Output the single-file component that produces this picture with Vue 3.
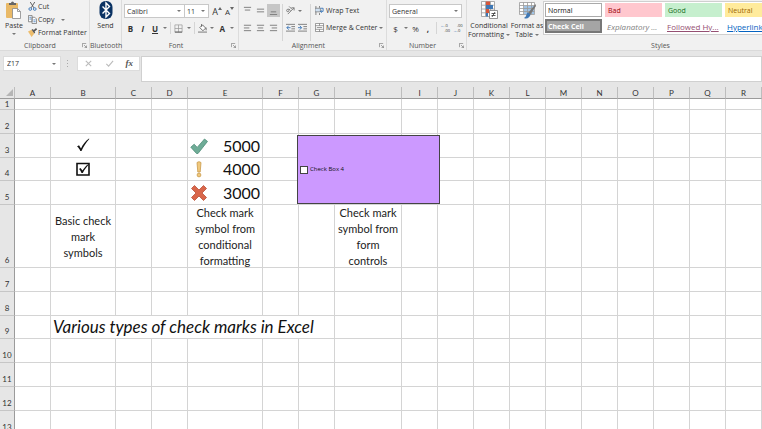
<script setup>
import { h, ref } from 'vue'

const Caret = () =>
  h('svg', { class: 'caret', viewBox: '0 0 4 2', 'aria-hidden': 'true' }, [h('path', { d: 'M0 0h4L2 2z' })])
const Launcher = () =>
  h('svg', { class: 'launcher', viewBox: '0 0 6 6', 'aria-hidden': 'true' }, [
    h('path', { d: 'M.5 5V.5H5M2.5 2.5l3 3M5.5 3v2.5H3', fill: 'none', stroke: '#777', 'stroke-width': '.8' })
  ])

const fontName = ref('Calibri')
const fontSize = ref('11')
const numberFormat = ref('General')
const nameBox = ref('Z17')
const formula = ref('')
const checked = ref(false)

const styles = [
  { name: 'Normal', kind: 'normal' },
  { name: 'Bad', kind: 'bad' },
  { name: 'Good', kind: 'good' },
  { name: 'Neutral', kind: 'neutral' },
  { name: 'Check Cell', kind: 'check' },
  { name: 'Explanatory ...', kind: 'explain' },
  { name: 'Followed Hy...', kind: 'followed' },
  { name: 'Hyperlink', kind: 'link' }
]

const columns = 'ABCDEFGHIJKLMNOPQR'.split('')
const wide = { B: 65, E: 75, H: 67 }
const heights = { 1: 11, 4: 23, 6: 63, 9: 23 }
const rows = Array.from({ length: 13 }, (_, i) => i + 1)
const cells = {
  B3: { icon: 'tick' },
  B4: { icon: 'boxed' },
  E3: { icon: 'good', value: '5000' },
  E4: { icon: 'warn', value: '4000' },
  E5: { icon: 'bad', value: '3000' },
  B6: { note: 'Basic check mark symbols' },
  E6: { note: 'Check mark symbol from conditional formatting' },
  H6: { note: 'Check mark symbol from form controls' },
  B9: { title: 'Various types of check marks in Excel', span: 6 }
}
const cell = (c, r) => cells[c + r] || {}
const columnsOf = (r) => (r === 9 ? columns.filter((c) => !'CDEFG'.includes(c)) : columns)
</script>

<template>
  <main class="app">
    <header class="ribbon">
      <section class="group clipboard">
        <div class="tools">
          <button class="big">
            <svg class="big-icon" viewBox="0 0 18 18">
              <rect x="1" y="2" width="12" height="15" rx="1" fill="#e9b967" />
              <path d="M4 4V2h2a1.500 1.500 0 0 1 3 0h2v2z" fill="#666" />
              <path d="M7.500 7.500h5l3 3v7h-8z" fill="#fff" stroke="#888" stroke-width=".8" />
              <path d="M12.500 7.500v3h3" fill="none" stroke="#888" stroke-width=".8" />
            </svg>
            <span>Paste</span>
            <Caret />
          </button>
          <div class="stack">
            <button class="small">
              <svg class="icon" viewBox="0 0 10 10">
                <path d="M2.500 0l4 6.500M7.500 0l-4 6.500" stroke="#555" fill="none" />
                <circle cx="2.500" cy="7.800" r="1.500" fill="none" stroke="#3a76b8" />
                <circle cx="7.500" cy="7.800" r="1.500" fill="none" stroke="#3a76b8" />
              </svg>
              Cut
            </button>
            <button class="small">
              <svg class="icon" viewBox="0 0 10 10">
                <path d="M.5.5h4v7h-4zM4.500 2.500h3l2 2v5h-5z" fill="#fff" stroke="#777" stroke-width=".9" />
                <path d="M1.500 2.500h2M1.500 4.500h2M6 5.500h2.500M6 7.500h2.500" stroke="#3a76b8" stroke-width=".9" />
              </svg>
              Copy <Caret class="spaced" />
            </button>
            <button class="small">
              <svg class="icon" viewBox="0 0 10 10">
                <path d="M0 4l4-2 3 4-3 4z" fill="#edbd6d" />
                <path d="M4 2l3 4 1-1-2.500-4z" fill="#555" />
                <path d="M6.500 3.500L9.500.8" stroke="#555" stroke-width="1.800" />
              </svg>
              Format Painter
            </button>
          </div>
        </div>
        <footer>Clipboard<Launcher /></footer>
      </section>

      <section class="group bluetooth">
        <div class="tools">
          <button class="big">
            <svg class="big-icon" viewBox="0 0 18 18">
              <rect x="2.500" y="0" width="13" height="18" rx="6" fill="#0a3263" />
              <path d="M5.500 5.500l7 7L9 16V2l3.500 3.500-7 7" fill="none" stroke="#fff" stroke-width="1.400" />
            </svg>
            <span>Send</span>
          </button>
        </div>
        <footer>Bluetooth</footer>
      </section>

      <section class="group font">
        <div class="tools lines">
          <div class="line">
            <label class="combo family">
              <select v-model="fontName" aria-label="Font"><option>Calibri</option></select><Caret />
            </label>
            <label class="combo size">
              <select v-model="fontSize" aria-label="Font size"><option>11</option></select><Caret />
            </label>
            <button class="grow" aria-label="Increase font size">A<svg viewBox="0 0 4 3"><path d="M0 3l2-3 2 3z" /></svg></button>
            <button class="grow less" aria-label="Decrease font size">A<svg viewBox="0 0 4 3"><path d="M0 0h4L2 3z" /></svg></button>
          </div>
          <div class="line marks">
            <button class="mark"><b>B</b></button>
            <button class="mark"><b><i>I</i></b></button>
            <button class="mark"><b><u>U</u></b></button>
            <Caret />
            <span class="rule"></span>
            <button class="mark" aria-label="Borders">
              <svg class="icon" viewBox="0 0 10 10">
                <path d="M1 1h8v8H1zM5 1v8M1 5h8" fill="none" stroke="#999" stroke-width=".8" />
                <path d="M1 9h8" stroke="#555" />
              </svg>
            </button>
            <Caret />
            <span class="rule"></span>
            <button class="mark" aria-label="Fill colour">
              <svg class="icon" viewBox="0 0 10 10">
                <path d="M2 4l3-3 3.500 3.500-3 3z" fill="#fff" stroke="#555" stroke-width=".9" />
                <path d="M4 3V0M9 4v3" stroke="#555" stroke-width=".9" />
                <path d="M0 9h10" stroke="#999" stroke-width="1.500" />
              </svg>
            </button>
            <Caret />
            <button class="mark"><b>A</b></button>
            <Caret />
          </div>
        </div>
        <footer>Font<Launcher /></footer>
      </section>

      <section class="group alignment">
        <div class="tools aligns">
          <div class="align-grid">
            <button aria-label="Top align"><svg class="icon" viewBox="0 0 10 10"><path d="M1 1.500h8M2 4.500h6" /></svg></button>
            <button aria-label="Middle align"><svg class="icon" viewBox="0 0 10 10"><path d="M1 3.500h8M1 6.500h8" /></svg></button>
            <button class="active" aria-label="Bottom align"><svg class="icon" viewBox="0 0 10 10"><path d="M2 6.500h6M1 9.500h8" /></svg></button>
            <button aria-label="Align left"><svg class="icon" viewBox="0 0 10 10"><path d="M1 2.500h8M1 5.500h6M1 8.500h8" /></svg></button>
            <button aria-label="Center"><svg class="icon" viewBox="0 0 10 10"><path d="M1 2.500h8M2 5.500h6M1 8.500h8" /></svg></button>
            <button aria-label="Align right"><svg class="icon" viewBox="0 0 10 10"><path d="M1 2.500h8M3 5.500h6M1 8.500h8" /></svg></button>
          </div>
          <div class="indent">
            <button aria-label="Orientation">
              <svg class="icon" viewBox="0 0 10 10">
                <path d="M2 9l7-7M9 5V2H6" fill="none" />
                <circle cx="2" cy="5" r="1.300" fill="none" /><path d="M3 3l2 2M3.500.5l3 3" fill="none" />
              </svg>
              <Caret />
            </button>
            <div class="pair">
              <button aria-label="Decrease indent"><svg class="icon" viewBox="0 0 10 10"><path d="M0 1.500h10M6 4h4M6 6.500h4M0 9h10" /><path d="M5 5.200H1M3 3L1 5.200l2 2.200" class="blue" /></svg></button>
              <button aria-label="Increase indent"><svg class="icon" viewBox="0 0 10 10"><path d="M0 1.500h10M6 4h4M6 6.500h4M0 9h10" /><path d="M0 5.200h4M2 3l2 2.200-2 2.200" class="blue" /></svg></button>
            </div>
          </div>
          <div class="wraps">
            <button class="small">
              <svg class="icon" viewBox="0 0 10 10">
                <path d="M1 0v10M5 0v2M5 8v2" stroke="#888" />
                <path d="M0 2.500h6v4H0z" fill="#cfe0f1" stroke="#888" stroke-width=".8" />
                <path d="M6 2.500h3v3.500H6M7.500 4.500L6 6l1.500 1.500" fill="none" class="blue" />
              </svg>
              Wrap Text
            </button>
            <button class="small">
              <svg class="icon" viewBox="0 0 10 10">
                <path d="M.5.5h9v9h-9zM.5 3h9M.5 7h9M5 .5V3M5 7v2.500" fill="#fff" stroke="#777" stroke-width=".8" />
                <path d="M2 5h6" stroke="#555" stroke-width=".8" />
              </svg>
              Merge &amp; Center <Caret />
            </button>
          </div>
        </div>
        <footer>Alignment<Launcher /></footer>
      </section>

      <section class="group number">
        <div class="tools lines">
          <label class="combo">
            <select v-model="numberFormat" aria-label="Number format"><option>General</option></select><Caret />
          </label>
          <div class="line formats">
            <button class="mark">$</button>
            <Caret />
            <button class="mark">%</button>
            <button class="mark"><b>,</b></button>
            <span class="rule"></span>
            <button class="decimal" aria-label="Increase decimal">
              <span class="arrow">←</span><span>.0</span><span></span><span>.00</span>
            </button>
            <button class="decimal" aria-label="Decrease decimal">
              <span></span><span>.00</span><span class="arrow">→</span><span>.0</span>
            </button>
          </div>
        </div>
        <footer>Number<Launcher /></footer>
      </section>

      <section class="group styles">
        <div class="tools">
          <button class="big">
            <svg class="big-icon" viewBox="0 0 18 18">
              <path d="M1.500.5h13v15h-13zM1.500 4.200h13M1.500 8h13M1.500 11.800h13M5.500.5v15M10.500.5v15" fill="#fff" stroke="#999" stroke-width=".8" />
              <path d="M6 .5h4v3.500H6zM6 8h3v4H6z" fill="#d5573b" />
              <path d="M6 4h7v4H6zM6 12h2v3.500H6z" fill="#3f78b5" />
              <path d="M9.500 9.500h8v8h-8z" fill="#fff" stroke="#777" stroke-width=".8" />
              <path d="M11.500 12.500h4M11.500 14.500h4M15 11l-3 5" stroke="#333" stroke-width=".8" />
            </svg>
            <span>Conditional</span>
            <span class="with-caret">Formatting <Caret /></span>
          </button>
          <button class="big">
            <svg class="big-icon" viewBox="0 0 18 18">
              <path d="M1.500 1.500h15v12h-15z" fill="#fff" />
              <path d="M6 5h10v8H6z" fill="#9fc3e6" />
              <path d="M1.500 1.500h15v12h-15zM1.500 4.500h15M1.500 7.500h15M1.500 10.500h15M5.500 1.500v12M9.500 1.500v12M13.500 1.500v12" fill="none" stroke="#999" stroke-width=".8" />
              <path d="M17.500 3L10 12l2 2 6-9z" fill="#777" />
              <path d="M10 11.500c-2 1-1 4-4 5.500 3 1.500 6-.5 6.500-3.500z" fill="#3f78b5" />
            </svg>
            <span>Format as</span>
            <span class="with-caret">Table <Caret /></span>
          </button>
          <div class="gallery">
            <button v-for="s in styles" :key="s.name" class="swatch" :class="s.kind">{{ s.name }}</button>
          </div>
        </div>
        <footer>Styles</footer>
      </section>
    </header>

    <div class="formula-bar">
      <label class="name-box"><input v-model="nameBox" aria-label="Name box" /><Caret /></label>
      <svg class="grip" viewBox="0 0 2 10"><path d="M0 1h1v1H0zM0 4h1v1H0zM0 7h1v1H0z" /></svg>
      <div class="entry">
        <button aria-label="Cancel"><svg class="icon" viewBox="0 0 10 10"><path d="M2 2l6 6M8 2L2 8" fill="none" stroke="#bbb" stroke-width="1.200" /></svg></button>
        <button aria-label="Enter"><svg class="icon" viewBox="0 0 10 10"><path d="M1.500 5.500L4 8l5-6" fill="none" stroke="#bbb" stroke-width="1.200" /></svg></button>
        <button class="fx"><i>fx</i></button>
      </div>
      <input v-model="formula" class="formula" aria-label="Formula bar" />
    </div>

    <div class="sheet">
      <table>
        <colgroup>
          <col class="row-col" />
          <col v-for="c in columns" :key="c" :style="{ width: (wide[c] || 36) + 'px' }" />
        </colgroup>
        <thead>
          <tr>
            <th class="corner"><svg viewBox="0 0 8 8"><path d="M8 0v8H0z" fill="#b5b5b5" /></svg></th>
            <th v-for="c in columns" :key="c" scope="col">{{ c }}</th>
          </tr>
        </thead>
        <tbody>
          <tr v-for="r in rows" :key="r" :style="{ height: (heights[r] || 24) + 'px' }">
            <th scope="row" :class="{ first: r === 1 }">{{ r }}</th>
            <td v-for="c in columnsOf(r)" :key="c" :colspan="cell(c, r).span">
              <div v-if="cell(c, r).note" class="note">{{ cell(c, r).note }}</div>
              <div v-else-if="cell(c, r).title" class="title">{{ cell(c, r).title }}</div>
              <div v-else-if="cell(c, r).icon" class="value" :class="{ centered: !cell(c, r).value }">
                <svg v-if="cell(c, r).icon === 'tick'" class="symbol" viewBox="0 0 18 18">
                  <path d="M3 9.500l2-1.200 2 3.200C8.800 7.500 11.500 4 15 1.500l.3.500C12 5.500 9.500 9.500 7.500 14H6.300C5.500 12 4.500 10.500 3 9.500z" fill="#111" />
                </svg>
                <svg v-else-if="cell(c, r).icon === 'boxed'" class="symbol" viewBox="0 0 18 18">
                  <path d="M3 3.500h12v11.500H3z" fill="none" stroke="#111" stroke-width="1.600" />
                  <path d="M5 9l1.500-1 2 2.500C10 8 12 5.500 14.500 4l.3.500C12.500 7 10.500 9.500 8.800 13H7.500C7 11.500 6 10 5 9z" fill="#111" />
                </svg>
                <svg v-else-if="cell(c, r).icon === 'good'" class="symbol" viewBox="0 0 18 18">
                  <path d="M.8 10.200l3.400-3 3 3.200L14.500 2l3 2.400L8 16.500H6.500z" fill="#6fac97" stroke="#4f8e79" stroke-width=".8" />
                </svg>
                <svg v-else-if="cell(c, r).icon === 'warn'" class="symbol" viewBox="0 0 18 18">
                  <path d="M7 2.500Q9 .8 11 2.500L10.200 12H7.800z" fill="#f0c87c" stroke="#c99a4c" stroke-width=".8" />
                  <circle cx="9" cy="15" r="1.900" fill="#f0c87c" stroke="#c99a4c" stroke-width=".8" />
                </svg>
                <svg v-else class="symbol" viewBox="0 0 18 18">
                  <path d="M1.500 4.500l3-3L9 6l4.500-4.500 3 3L12 9l4.500 4.500-3 3L9 12l-4.500 4.500-3-3L6 9z" fill="#d9664a" stroke="#b94f36" stroke-width=".8" />
                </svg>
                <span v-if="cell(c, r).value">{{ cell(c, r).value }}</span>
              </div>
            </td>
          </tr>
        </tbody>
      </table>
      <label class="form-control"><input v-model="checked" type="checkbox" />Check Box 4</label>
    </div>
  </main>
</template>

<style>
body {
  margin: 0;
}
</style>

<style scoped>
* {
  box-sizing: border-box;
}
.app {
  display: flex;
  flex-direction: column;
  height: 100vh;
  overflow: hidden;
  background: #e6e6e6;
  color: #333;
  font-family: "Open Sans", "Noto Sans", sans-serif;
  font-size: 7px;
  line-height: 9px;
}
button,
input,
select {
  margin: 0;
  padding: 0;
  border: 0;
  border-radius: 0;
  background: none;
  color: inherit;
  font: inherit;
  appearance: none;
  outline: none;
}
svg {
  display: block;
  flex: none;
}
.icon {
  width: 9px;
  height: 9px;
}
.caret {
  width: 4px;
  height: 2px;
  fill: #777;
}
.ribbon {
  display: flex;
  flex: none;
  height: 51px;
  background: #f1f1f1;
  border-bottom: 1px solid #dadada;
}
.group {
  display: flex;
  flex: none;
  flex-direction: column;
  border-right: 1px solid #dcdcdc;
}
.tools {
  display: flex;
  height: 41px;
}
.group footer {
  position: relative;
  color: #555;
  text-align: center;
}
.launcher {
  position: absolute;
  right: 2px;
  top: 2px;
  width: 5px;
  height: 5px;
}
.big {
  display: flex;
  flex-direction: column;
  align-items: center;
  padding-top: 1px;
  white-space: nowrap;
}
.big-icon {
  width: 18px;
  height: 18px;
  margin-bottom: 2px;
}
.big > .caret {
  margin-top: 3px;
}
.with-caret {
  display: flex;
  align-items: center;
  gap: 2px;
}
.small {
  display: flex;
  align-items: center;
  gap: 1px;
  white-space: nowrap;
}
.spaced {
  margin-left: 6px;
}
.clipboard {
  width: 90px;
}
.clipboard footer {
  padding-right: 9px;
}
.clipboard .big {
  width: 28px;
}
.stack {
  display: grid;
  grid-template-rows: repeat(3, 13px);
}
.bluetooth {
  width: 32px;
}
.bluetooth .tools {
  justify-content: center;
}
.font {
  width: 117px;
}
.font footer {
  padding-right: 8px;
}
.lines {
  flex-direction: column;
  gap: 3px;
  padding: 4px 4px 0 2px;
}
.line {
  display: flex;
  align-items: center;
  height: 14px;
}
.combo {
  display: flex;
  align-items: center;
  height: 14px;
  padding: 0 3px 0 2px;
  border: 1px solid #c8c8c8;
  background: #fff;
}
.combo select {
  flex: 1;
  min-width: 0;
}
.family {
  width: 63px;
}
.size {
  width: 25px;
  border-left: 0;
}
.grow {
  display: flex;
  margin-left: 3px;
  font-size: 9px;
}
.grow svg {
  width: 4px;
  height: 3px;
  fill: #666;
}
.less {
  font-size: 8px;
}
.marks {
  justify-content: space-between;
  padding-left: 2px;
}
.mark {
  min-width: 9px;
  font-size: 8px;
  text-align: center;
}
.rule {
  width: 1px;
  height: 12px;
  background: #d5d5d5;
}
.alignment {
  width: 148px;
}
.alignment footer {
  padding-right: 8px;
}
.aligns {
  padding: 4px 0 0 2px;
}
.aligns path,
.aligns circle {
  stroke: #777;
}
.aligns path.blue {
  fill: none;
  stroke: #3a76b8;
}
.align-grid {
  display: grid;
  grid-template-columns: repeat(3, 13px);
  grid-template-rows: 13px 13px;
  gap: 4px 0;
}
.align-grid button,
.pair button {
  display: grid;
  place-items: center;
}
.align-grid .active {
  background: #c6c6c6;
}
.indent {
  display: grid;
  grid-template-rows: 13px 13px;
  gap: 4px;
  margin-left: 2px;
  padding: 0 3px;
  border-left: 1px solid #d5d5d5;
  border-right: 1px solid #d5d5d5;
}
.indent > button,
.pair {
  display: flex;
  align-items: center;
  gap: 3px;
}
.wraps {
  display: grid;
  grid-template-rows: 13px 13px;
  gap: 4px;
  padding-left: 4px;
}
.wraps .small {
  gap: 2px;
}
.number {
  width: 80px;
}
.number footer {
  padding-right: 8px;
}
.formats {
  justify-content: space-between;
  padding-left: 2px;
}
.decimal {
  display: grid;
  grid-template-columns: 4px 5px;
  font-size: 4px;
  line-height: 5px;
  text-align: left;
}
.arrow {
  color: #3a76b8;
}
.styles {
  flex: 1;
  min-width: 0;
  overflow: hidden;
  border: 0;
}
.styles footer {
  padding-left: 92px;
}
.styles .big {
  flex: none;
  width: 32px;
}
.styles .big:first-child {
  width: 44px;
}
.gallery {
  display: grid;
  grid-template-columns: repeat(4, 57px);
  grid-template-rows: 14px 14px;
  gap: 2px 3px;
  height: 34px;
  margin: 1px 0 0;
  padding: 1px;
  border: 1px solid #cfcfcf;
  background: #fff;
}
.swatch {
  padding-left: 3px;
  text-align: left;
  white-space: nowrap;
}
.normal {
  border: 1px solid #aaa;
  padding-left: 2px;
  color: #111;
}
.bad {
  background: #ffc7ce;
  color: #9c0006;
}
.good {
  background: #c6efce;
  color: #156a1c;
}
.neutral {
  background: #ffeb9c;
  color: #9c6500;
}
.check {
  border: 2px solid #777;
  padding-left: 1px;
  background: #a5a5a5;
  color: #fff;
  font-weight: 700;
}
.explain,
.followed,
.link {
  padding-left: 2px;
  font-size: 8px;
}
.explain {
  color: #7f7f7f;
  font-style: italic;
}
.followed {
  color: #954f72;
  text-decoration: underline;
}
.link {
  color: #0563c1;
  text-decoration: underline;
}
.formula-bar {
  display: flex;
  flex: none;
  align-items: flex-start;
  height: 36px;
  padding: 5px 0 0 3px;
}
.name-box {
  display: flex;
  align-items: center;
  width: 58px;
  height: 15px;
  padding: 0 4px 0 3px;
  border: 1px solid #dcdcdc;
  background: #fff;
}
.name-box input {
  flex: 1;
  min-width: 0;
}
.grip {
  width: 2px;
  height: 10px;
  margin: 3px 8px 0 6px;
  fill: #aaa;
}
.entry {
  display: flex;
  align-items: center;
  justify-content: space-around;
  width: 63px;
  height: 15px;
  border: 1px solid #dcdcdc;
  background: #fff;
}
.fx {
  color: #555;
  font-family: "Liberation Serif", serif;
  font-size: 9px;
  font-weight: 700;
}
.formula {
  flex: 1;
  min-width: 0;
  height: 26px;
  margin-left: 1px;
  padding: 0 4px;
  border: 1px solid #d0d0d0;
  background: #fff;
}
.sheet {
  position: relative;
  flex: 1;
  min-height: 0;
  overflow: hidden;
  background: #fff;
  font-family: Lato, sans-serif;
}
table {
  width: 100%;
  border-collapse: separate;
  border-spacing: 0;
  table-layout: fixed;
}
.row-col {
  width: 15px;
}
th,
td {
  padding: 0;
  border-right: 1px solid #d4d4d4;
  border-bottom: 1px solid #d4d4d4;
}
th {
  background: #e6e6e6;
  color: #333;
  font-size: 8px;
  font-weight: 400;
  line-height: 8px;
}
thead tr {
  height: 12px;
}
thead th {
  border-color: #bdbdbd;
  border-bottom-color: #9b9b9b;
}
.corner svg {
  width: 7px;
  height: 7px;
  margin-left: 6px;
}
tbody th {
  padding-bottom: 3px;
  border-right-color: #9b9b9b;
  border-bottom-color: #c6c6c6;
  vertical-align: bottom;
}
tbody .first {
  padding-bottom: 0;
  vertical-align: middle;
}
.note {
  display: flex;
  align-items: center;
  justify-content: center;
  height: 62px;
  padding: 2px 1px 0;
  color: #222;
  font-size: 11px;
  line-height: 16px;
  text-align: center;
}
.title {
  padding-left: 2px;
  color: #111;
  font-size: 17px;
  font-style: italic;
  line-height: 20px;
  white-space: nowrap;
}
.value {
  display: flex;
  align-items: center;
  justify-content: space-between;
  padding: 0 2px;
  color: #111;
  font-size: 16px;
  line-height: 20px;
}
.centered {
  justify-content: center;
}
.symbol {
  width: 18px;
  height: 18px;
}
.form-control {
  position: absolute;
  left: 297px;
  top: 48px;
  display: flex;
  align-items: center;
  gap: 2px;
  width: 143px;
  height: 69px;
  padding-left: 2px;
  border: 1px solid #444;
  background: #cc99ff;
  color: #111;
  font-family: "Open Sans", sans-serif;
  font-size: 6px;
}
.form-control input {
  width: 8px;
  height: 8px;
  border: 1px solid #444;
  background: #fff;
}
.form-control input:checked {
  background: #444;
}
</style>
